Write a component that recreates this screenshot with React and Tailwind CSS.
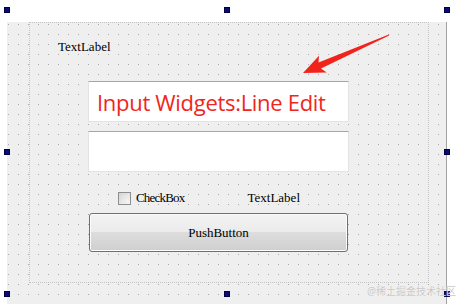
const simsun = "font-['Liberation_Serif',serif] text-[13px] text-black";

const Handle = () => <div className="w-[6px] h-[6px] bg-[#0a0a78] border border-[#000040]" />;

const DotGrid = () => (
  <svg className="absolute inset-0 w-full h-full" width="440" height="283">
    <defs>
      <pattern id="dots" x="1" y="2" width="10" height="10" patternUnits="userSpaceOnUse">
        <rect x="0" y="0" width="1" height="1" fill="#a9a9a9" />
      </pattern>
    </defs>
    <rect width="100%" height="100%" fill="url(#dots)" />
  </svg>
);

const Arrow = () => (
  <svg className="absolute left-0 top-0" width="465" height="304">
    <polygon
      points="389.5,34.2 388.6,35.8 321,68.5 326.7,72.5 303,73 319,55.8 318.5,62.5"
      fill="#f2231b"
    />
  </svg>
);

export default function App() {
  return (
    <div className="relative w-[465px] h-[304px] bg-white overflow-hidden pt-[10px] pl-[7px]">
      {/* form */}
      <div className="relative w-[440px] h-[283px] bg-[#efefef] border-r border-b border-[#a3a3a3]">
        <DotGrid />
        {/* layout frame */}
        <div className="relative ml-[22px] mt-[12px] w-[400px] h-[261px] border border-dotted border-[#c4c4c4] pl-[28px] pt-[16px]">
          <div className={`h-[16px] leading-[16px] ${simsun}`}>TextLabel</div>

          <div className="mt-[26px] ml-[30px] w-[261px] h-[41px] bg-white border border-[#e3e3e3] border-t-[#a6a6a6] flex items-center pl-[8px]">
            <span className="font-['Open_Sans',sans-serif] text-[22px] text-[#f0261c] leading-none tracking-[-0.3px]">
              Input Widgets:Line Edit
            </span>
          </div>

          <div className="mt-[9px] ml-[30px] w-[261px] h-[41px] bg-white border border-[#e3e3e3] border-t-[#a6a6a6]" />

          <div className="mt-[18px] h-[16px] flex items-center">
            <div className="ml-[60px] w-[13px] h-[13px] border border-[#8e8e8e] bg-[linear-gradient(135deg,#d4d4d4,#f6f6f6)] p-[2px]">
              <div className="w-full h-full bg-[linear-gradient(135deg,#dcdcdc,#f4f4f4)]" />
            </div>
            <span className={`ml-[5px] tracking-[-0.8px] ${simsun}`}>CheckBox</span>
            <span className={`ml-[63px] ${simsun}`}>TextLabel</span>
          </div>

          <div className="mt-[7px] ml-[31px] w-[259px] h-[39px] rounded-[3px] border border-[#707070] bg-[linear-gradient(#f3f3f3_0%,#ebebeb_48%,#dddddd_50%,#cfcfcf_100%)] shadow-[inset_0_0_0_1px_#fcfcfc] flex items-center justify-center">
            <span className={simsun}>PushButton</span>
          </div>
        </div>
      </div>

      <Arrow />

      {/* selection handles */}
      <div className="absolute left-[4px] top-[7px] w-[446px] h-[290px] flex flex-col justify-between">
        <div className="flex justify-between">
          <Handle />
          <Handle />
          <Handle />
        </div>
        <div className="flex justify-between">
          <Handle />
          <Handle />
        </div>
        <div className="flex justify-between">
          <Handle />
          <Handle />
          <Handle />
        </div>
      </div>

      <div className="absolute left-[367px] top-[284px] whitespace-nowrap font-['Noto_Sans','Noto_Sans_CJK_SC',sans-serif] text-[10px] leading-[14px] text-[#c9c9c9] [text-shadow:0_0_1px_#ffffff]">
        @稀土掘金技术社区
      </div>
    </div>
  );
}
